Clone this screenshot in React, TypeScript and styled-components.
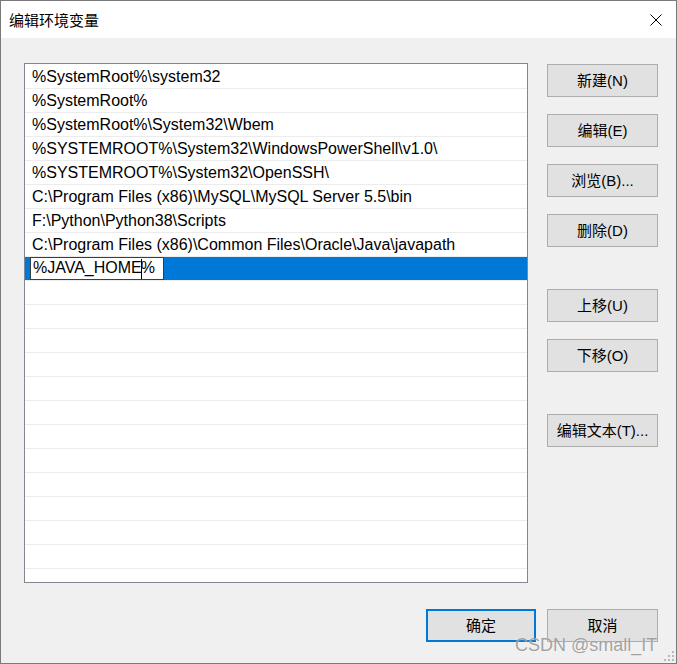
import React from "react";
import styled, { createGlobalStyle } from "styled-components";

const Global = createGlobalStyle`
  html, body { margin: 0; padding: 0; background: #f0f0f0; }
  * { box-sizing: border-box; }
`;

const FONT = `"Liberation Sans", "Noto Sans CJK SC", sans-serif`;

const Window = styled.div`
  position: relative;
  width: 677px;
  height: 664px;
  border: 1px solid #7a7a7a;
  background: #f0f0f0;
  display: flex;
  flex-direction: column;
  font-family: ${FONT};
  color: #000;
  overflow: hidden;
`;

const TitleBar = styled.div`
  height: 37px;
  flex: none;
  background: #fff;
  display: flex;
  align-items: center;
  justify-content: space-between;
  padding: 0 14px 0 8px;
`;

const Title = styled.div`
  font-size: 15px;
  line-height: 1;
  padding-top: 1px;
`;

const CloseButton = styled.div`
  width: 12px;
  height: 12px;
  display: flex;
`;

const Body = styled.div`
  flex: 1;
  display: flex;
  flex-direction: column;
  padding: 25px 18px 0 23px;
`;

const Main = styled.div`
  display: flex;
  gap: 19px;
`;

const ListBox = styled.div`
  width: 504px;
  height: 520px;
  flex: none;
  background: #fff;
  border: 1px solid #828790;
  padding-top: 1px;
  overflow: hidden;
`;

const Row = styled.div<{ $selected?: boolean }>`
  height: 24px;
  border-bottom: 1px solid #ececec;
  display: flex;
  align-items: center;
  padding-left: ${(p) => (p.$selected ? "5px" : "7px")};
  padding-top: ${(p) => (p.$selected ? "0" : "1px")};
  background: ${(p) => (p.$selected ? "#0078d7" : "#fff")};
  font-size: 16px;
  white-space: nowrap;
`;

const EditBox = styled.div`
  width: 134px;
  height: 23px;
  background: #fff;
  border: 1px solid #3c3c3c;
  display: flex;
  align-items: center;
  padding: 1px 0 0 2px;
  font-size: 16px;
  align-self: flex-start;
`;

const Caret = styled.span`
  display: inline-block;
  width: 1px;
  height: 20px;
  background: #000;
  margin: 0 -1px 0 -1px;
  vertical-align: middle;
`;

const SideColumn = styled.div`
  width: 111px;
  padding-top: 1px;
  display: flex;
  flex-direction: column;
  gap: 17px;
`;

const Button = styled.div<{ $gapBefore?: number; $width?: number; $default?: boolean }>`
  width: ${(p) => p.$width ?? 111}px;
  height: 33px;
  flex: none;
  margin-top: ${(p) => p.$gapBefore ?? 0}px;
  background: #e1e1e1;
  border: ${(p) => (p.$default ? "2px solid #0078d7" : "1px solid #adadad")};
  display: flex;
  align-items: center;
  justify-content: center;
  font-size: 15px;
  line-height: 1;
  white-space: nowrap;
`;

const Footer = styled.div`
  margin-top: 26px;
  display: flex;
  justify-content: flex-end;
  gap: 11px;
`;

const Watermark = styled.div`
  position: absolute;
  left: 514px;
  top: 635px;
  font-family: "Liberation Sans", sans-serif;
  font-size: 18px;
  line-height: 18px;
  color: rgba(100, 100, 100, 0.6);
  text-shadow: 0 0 1px rgba(255, 255, 255, 0.9);
  white-space: nowrap;
  pointer-events: none;
`;

const Grip = styled.svg`
  position: absolute;
  right: 1px;
  bottom: 1px;
`;

const paths = [
  "%SystemRoot%\\system32",
  "%SystemRoot%",
  "%SystemRoot%\\System32\\Wbem",
  "%SYSTEMROOT%\\System32\\WindowsPowerShell\\v1.0\\",
  "%SYSTEMROOT%\\System32\\OpenSSH\\",
  "C:\\Program Files (x86)\\MySQL\\MySQL Server 5.5\\bin",
  "F:\\Python\\Python38\\Scripts",
  "C:\\Program Files (x86)\\Common Files\\Oracle\\Java\\javapath",
];

const TOTAL_ROWS = 22;

export default function App() {
  const empties = TOTAL_ROWS - paths.length - 1;
  return (
    <>
      <Global />
      <Window>
        <TitleBar>
          <Title>编辑环境变量</Title>
          <CloseButton>
            <svg width="12" height="12" viewBox="0 0 12 12">
              <path d="M0.5 0.5 L11.5 11.5 M11.5 0.5 L0.5 11.5" stroke="#000" strokeWidth="1" fill="none" />
            </svg>
          </CloseButton>
        </TitleBar>
        <Body>
          <Main>
            <ListBox>
              {paths.map((p) => (
                <Row key={p}>{p}</Row>
              ))}
              <Row $selected>
                <EditBox>
                  <span>
                    %JAVA_HOME<Caret />%
                  </span>
                </EditBox>
              </Row>
              {Array.from({ length: empties }).map((_, i) => (
                <Row key={"e" + i} />
              ))}
            </ListBox>
            <SideColumn>
              <Button>新建(N)</Button>
              <Button>编辑(E)</Button>
              <Button>浏览(B)...</Button>
              <Button>删除(D)</Button>
              <Button $gapBefore={25}>上移(U)</Button>
              <Button>下移(O)</Button>
              <Button $gapBefore={25}>编辑文本(T)...</Button>
            </SideColumn>
          </Main>
          <Footer>
            <Button $width={110} $default>确定</Button>
            <Button>取消</Button>
          </Footer>
        </Body>
        <Watermark>CSDN @small_IT</Watermark>
        <Grip width="12" height="12" viewBox="0 0 12 12">
          {[
            [9, 1],
            [5, 5],
            [9, 5],
            [1, 9],
            [5, 9],
            [9, 9],
          ].map(([x, y]) => (
            <rect key={`${x}-${y}`} x={x} y={y} width="2" height="2" fill="#b8b8b8" />
          ))}
        </Grip>
      </Window>
    </>
  );
}
